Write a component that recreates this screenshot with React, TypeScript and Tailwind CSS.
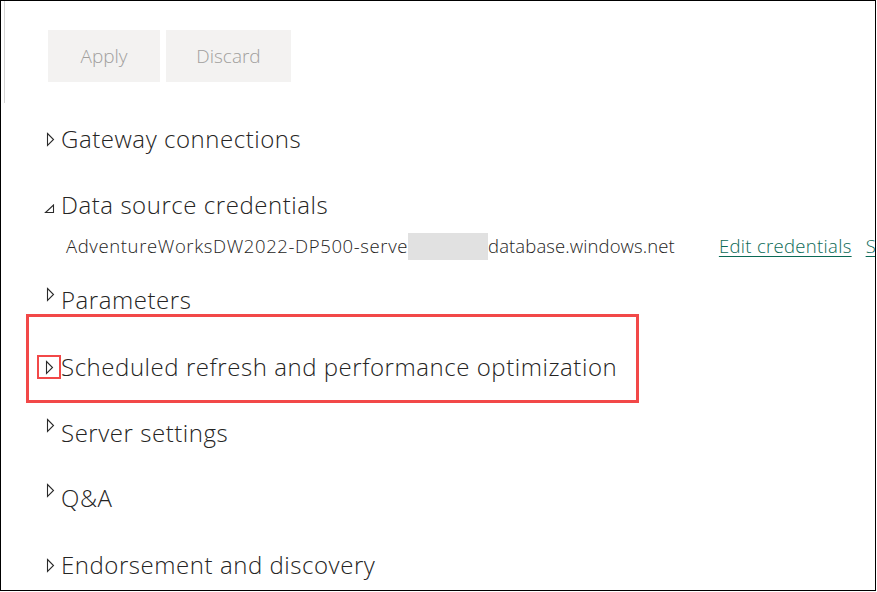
import React from "react";

const font = { fontFamily: "'Open Sans', 'Noto Sans', sans-serif" };

function Collapsed({ className = "" }: { className?: string }) {
  return (
    <svg width="9" height="15" viewBox="0 0 9 15" className={className}>
      <path d="M1.5 1.5 L7.5 7.5 L1.5 13.5 Z" fill="none" stroke="#2b2b2b" strokeWidth="1.1" />
    </svg>
  );
}

function Expanded({ className = "" }: { className?: string }) {
  return (
    <svg width="11" height="10" viewBox="0 0 11 10" className={className}>
      <path d="M9.5 1 L9.5 8.5 L1.5 8.5 Z" fill="none" stroke="#2b2b2b" strokeWidth="1.1" />
    </svg>
  );
}

function Heading({ label, tri = "center" }: { label: string; tri?: "center" | "top" }) {
  return (
    <div className="flex h-[40px] items-center pl-[41px]">
      <div className={`flex h-full w-[15px] ${tri === "top" ? "items-start pt-[5px]" : "items-center"}`}>
        <Collapsed />
      </div>
      <span className="text-[24px] font-[350] tracking-[0.55px] text-[#252423]">{label}</span>
    </div>
  );
}

export default function App() {
  return (
    <div
      className="relative flex h-[591px] w-[876px] overflow-hidden border border-black bg-white"
      style={font}
    >
      <div className="ml-[3px] h-[102px] w-px shrink-0 bg-[#d4d4d4]" />
      <div className="flex flex-1 flex-col">
        <div className="mt-[29px] flex gap-[6px] pl-[43px]">
          <button className="h-[52px] w-[112px] bg-[#f3f2f1] text-[19px] font-[350] text-[#a19f9d]">Apply</button>
          <button className="h-[52px] w-[125px] bg-[#f3f2f1] text-[19px] font-[350] text-[#a19f9d]">Discard</button>
        </div>

        <div className="mt-[37px]">
          <Heading label="Gateway connections" />
        </div>

        <div className="mt-[26px] flex h-[40px] items-center pl-[39px]">
          <div className="flex h-full w-[17px] items-end pb-[11px]">
            <Expanded />
          </div>
          <span className="text-[24px] font-[350] tracking-[0.55px] text-[#252423]">Data source credentials</span>
        </div>

        <div className="mt-[7px] flex h-[28px] items-center whitespace-nowrap pl-[61px] text-[18.5px] font-[350] text-[#252423]">
          <span className="tracking-[0.62px]">AdventureWorksDW2022-DP500-serve</span>
          <span className="h-[27px] w-[80px] shrink-0 bg-[#e1e1e1]" />
          <span className="tracking-[0.1px]">database.windows.net</span>
          <a className="ml-[44px] tracking-[0.32px] text-[#0b6a56] underline underline-offset-[3px]">Edit credentials</a>
          <a className="ml-[14px] text-[#0b6a56] underline underline-offset-[3px]">Show</a>
        </div>

        <div className="mt-[26px] flex h-[28px] items-center pl-[41px]">
          <div className="flex h-full w-[15px] items-start pt-[1px]">
            <Collapsed />
          </div>
          <span className="text-[24px] font-[350] tracking-[0.55px] text-[#252423]">Parameters</span>
        </div>

        <div className="ml-[21px] h-[89px] w-[613px] border-[3px] border-[#f24848] pt-[30px]">
          <div className="flex h-[40px] items-center pl-[8px]">
            <div className="flex h-[24px] w-[24px] items-center justify-center border-2 border-[#f24848]">
              <Collapsed />
            </div>
            <span className="text-[24px] font-[350] tracking-[0.55px] text-[#252423]">
              Scheduled refresh and performance optimization
            </span>
          </div>
        </div>

        <div className="mt-[10px]">
          <Heading label="Server settings" tri="top" />
        </div>
        <div className="mt-[25px]">
          <Heading label="Q&A" tri="top" />
        </div>
        <div className="mt-[27px]">
          <Heading label="Endorsement and discovery" />
        </div>
      </div>
    </div>
  );
}
